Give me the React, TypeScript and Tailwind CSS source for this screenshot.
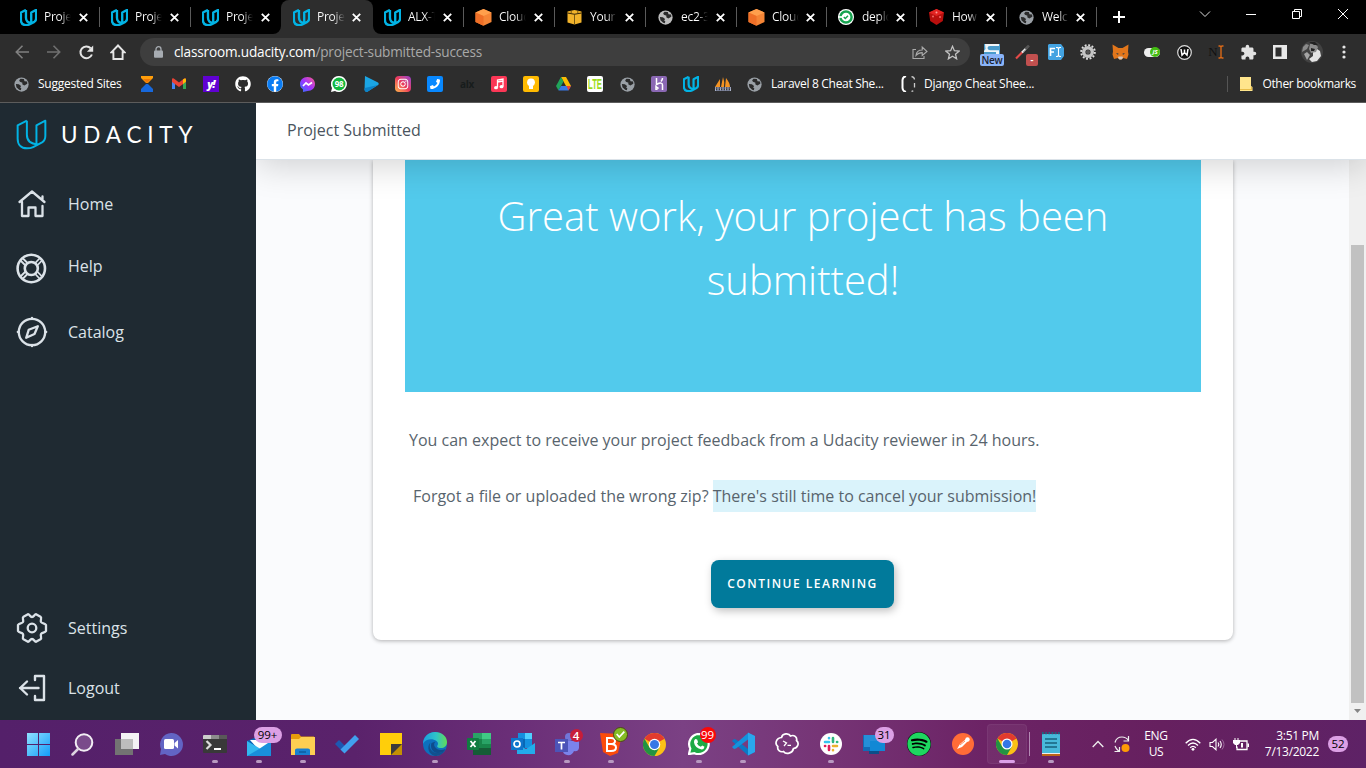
import React from "react";
import { FaGithub, FaInstagram, FaSpotify, FaFacebook, FaPhoneAlt } from "react-icons/fa";
import { MdExtension } from "react-icons/md";

type P = { s?: number };

const UMark = ({ s = 17, w = 13 }: { s?: number; w?: number }) => (
  <svg width={s} height={s} viewBox="0 0 94 94" fill="none" stroke="#02b3e4" strokeWidth={w} strokeLinejoin="round" className="shrink-0">
    <path d="M33 5 5 19V60C5 78 16 89 33 89C40 89 46 88 52 85L79 71C86 67 89 60 89 51V5L62 19V76" />
    <path d="M33 5V48C33 65 45 76 66 77" />
  </svg>
);

const Globe = ({ s = 15, c = "#9aa0a6" }: { s?: number; c?: string }) => (
  <svg width={s} height={s} viewBox="0 0 16 16" className="shrink-0">
    <circle cx="8" cy="8" r="7.6" fill={c} />
    <path d="M7 1.8 5.5 3.5 6.3 5 9 6.2 8.8 7.8 11 9 14.2 7.2 14 4.8 11.2 4.5 10.5 2Z" fill="#2b2b2b" />
    <path d="M2 7.4 5.2 7.6 7.5 9.5 6.6 11.5 7.8 12 7.3 14 5.5 13.6 2.6 11Z" fill="#2b2b2b" />
  </svg>
);

const Cube = () => (
  <svg width="17" height="17" viewBox="0 0 17 17">
    <path d="M8.5 0 16.5 3.5V13L8.5 16.8.5 13V3.5Z" fill="#f58536" />
    <path d="M8.5 0 16.5 3.5 8.5 7 .5 3.5Z" fill="#ff9f4c" />
    <path d="M8.5 7V16.8L.5 13V3.5Z" fill="#ef6f27" />
  </svg>
);

const Box = () => (
  <svg width="15" height="16" viewBox="0 0 15 16">
    <path d="M.5 2.5 7.5 1 14.5 2.5V13.5L7.5 15.5 .5 13.5Z" fill="#f2b32b" />
    <path d="M.5 4 7.5 5.2 14.5 4" stroke="#382808" strokeWidth="1.1" fill="none" />
    <path d="M4.2 4.5V1.5M10.8 4.5V1.5M7.5 5V15.5" stroke="#5c430e" strokeWidth=".8" fill="none" />
  </svg>
);

const CircleCI = () => (
  <svg width="16" height="16" viewBox="0 0 16 16">
    <circle cx="8" cy="8" r="8" fill="#fff" />
    <circle cx="8" cy="8" r="5.6" fill="none" stroke="#16a34f" strokeWidth="2.5" />
    <path d="M0 8H4" stroke="#fff" strokeWidth="1.7" />
    <path d="m5.8 8 1.5 1.5 2.7-2.7" fill="none" stroke="#16a34f" strokeWidth="1.5" />
  </svg>
);

const RedCube = () => (
  <svg width="15" height="16" viewBox="0 0 15 16">
    <path d="M7.5 0 15 3.5 13.8 12 7.5 16 1.2 12 0 3.5Z" fill="#b90f0d" />
    <path d="M7.5 0 15 3.5 7.5 7 0 3.5Z" fill="#e32422" />
    <circle cx="7.5" cy="3.6" r="1" fill="#ff9c98" />
    <circle cx="4" cy="7.5" r="1" fill="#f26a67" />
    <circle cx="11" cy="8" r="1" fill="#f26a67" />
  </svg>
);

const Close = () => (
  <svg width="9" height="9" viewBox="0 0 9 9" className="absolute right-[12px] top-[12.5px]">
    <path d="m.8.8 7.4 7.4m0-7.4L.8 8.2" stroke="#fff" strokeWidth="1.8" />
  </svg>
);

const tabs: { icon: React.ReactNode; t: string; active?: boolean; sep?: boolean; narrow?: boolean }[] = [
  { icon: <UMark />, t: "Proje", sep: true },
  { icon: <UMark />, t: "Proje", sep: true },
  { icon: <UMark />, t: "Proje" },
  { icon: <UMark />, t: "Proje", active: true },
  { icon: <UMark />, t: "ALX-T", sep: true },
  { icon: <Cube />, t: "Cloud", sep: true },
  { icon: <Box />, t: "Your", sep: true },
  { icon: <Globe c="#bdbdbd" />, t: "ec2-3", sep: true },
  { icon: <Cube />, t: "Cloud", sep: true, narrow: true },
  { icon: <CircleCI />, t: "deplo", sep: true, narrow: true },
  { icon: <RedCube />, t: "How", sep: true, narrow: true },
  { icon: <Globe />, t: "Welc", sep: true, narrow: true },
];

const TabBar = () => (
  <div className="flex h-[34px] bg-black pl-[9px]">
    {tabs.map((t, i) => (
      <div
        key={i}
        className={(t.narrow ? "w-[90px] " : "w-[91px] ") + "relative flex h-[34px] shrink-0 items-center pl-[10px] " + (t.active ? "z-10" : "")}
      >
        {t.active && (
          <span className="absolute -left-px bottom-0 -z-10 h-full w-[92px] rounded-t-[8px] bg-[#2d2d2d]">
            <svg width="8" height="8" viewBox="0 0 8 8" className="absolute -left-[8px] bottom-0"><path d="M8 0V8H0A8 8 0 0 0 8 0" fill="#2d2d2d" /></svg>
            <svg width="8" height="8" viewBox="0 0 8 8" className="absolute -right-[8px] bottom-0"><path d="M0 0V8H8A8 8 0 0 1 0 0" fill="#2d2d2d" /></svg>
          </span>
        )}
        <span className="flex w-[18px] justify-center">{t.icon}</span>
        <span className={"ml-[7px] w-[28px] whitespace-nowrap text-[12px] leading-[18px] tracking-[-0.25px] text-transparent bg-clip-text bg-gradient-to-r from-white from-60% " + (t.active ? "to-[#2d2d2d]" : "to-black")}>{t.t}</span>
        <Close />
        {t.sep && <i className="absolute right-0 top-[7px] h-5 w-px bg-[#5a5a5a]" />}
      </div>
    ))}
    <div className="flex w-[43px] items-center justify-center">
      <svg width="12" height="12" viewBox="0 0 12 12"><path d="M6 0V12M0 6H12" stroke="#fff" strokeWidth="2" /></svg>
    </div>
    <div className="ml-auto flex h-[28px] items-center">
      <svg width="46" height="12" viewBox="0 0 46 12"><path d="m18 3.5 5 5 5-5" stroke="#ddd" fill="none" /></svg>
      <svg width="46" height="12" viewBox="0 0 46 12"><path d="M18 6.5H28" stroke="#fff" /></svg>
      <svg width="46" height="12" viewBox="0 0 46 12"><path d="M18.5 3.5h7v7h-7zM20.5 3.5v-2h7v7h-2" stroke="#fff" fill="none" /></svg>
      <svg width="46" height="12" viewBox="0 0 46 12"><path d="m18 1 10 10M28 1 18 11" stroke="#fff" fill="none" /></svg>
    </div>
  </div>
);

const Cell = ({ children }: { children: React.ReactNode }) => <span className="relative flex w-8 shrink-0 items-center justify-center">{children}</span>;

const Toolbar = () => (
  <div className="flex h-[36px] shrink-0 items-center pl-[6px]">
    <Cell><svg width="14" height="14" viewBox="0 0 14 14"><path d="M14 7H1.5M7.5.8 1.3 7l6.2 6.2" fill="none" stroke="#808080" strokeWidth="1.6" /></svg></Cell>
    <Cell><svg width="14" height="14" viewBox="0 0 14 14"><path d="M0 7H12.5M6.5.8 12.7 7l-6.2 6.2" fill="none" stroke="#707070" strokeWidth="1.6" /></svg></Cell>
    <Cell><svg width="15" height="15" viewBox="0 0 15 15"><path d="M12.9 9.5A5.9 5.9 0 1 1 11.7 3.3" fill="none" stroke="#e5e5e5" strokeWidth="2" /><path d="M14.2 .5V6.8H7.9Z" fill="#e5e5e5" /></svg></Cell>
    <Cell><svg width="16" height="16" viewBox="0 0 16 16"><path d="M1.6 8.2 8 1.5l6.4 6.7H12.6V15H3.4V8.2Z" fill="none" stroke="#e5e5e5" strokeWidth="1.9" /></svg></Cell>
    <div className="ml-[6px] flex h-7 w-[830px] items-center rounded-full bg-[#3e3e3e] pl-[14px]">
      <svg width="9" height="12" viewBox="0 0 9 12"><rect y="4.5" width="9" height="7.2" rx="1" fill="#a7acb2" /><path d="M2 5V3.2a2.5 2.5 0 0 1 5 0V5" fill="none" stroke="#a7acb2" strokeWidth="1.3" /></svg>
      <span className="ml-[11px] whitespace-nowrap text-[13.6px] leading-5 tracking-[-0.18px] text-white">classroom.udacity.com<span className="text-[#a9a9a9]">/project-submitted-success</span></span>
      <span className="ml-auto flex w-8 justify-center"><svg width="16" height="15" viewBox="0 0 16 15"><path d="M4 4.5H1V13.5H12V11M4 10.5C4.4 7 7 5 10.2 5V2L15 6.5 10.2 10.5V7.6C7.5 7.6 5.6 8.5 4 10.5Z" fill="none" stroke="#aaa" strokeWidth="1.1" /></svg></span>
      <span className="mr-[2px] flex w-8 justify-center"><svg width="15" height="15" viewBox="0 0 24 24"><path d="m12 2 3 7 7.6.7-5.8 5 1.8 7.5L12 18.1l-6.6 4.1 1.8-7.5-5.8-5L9 9Z" fill="none" stroke="#c4c4c4" strokeWidth="2" /></svg></span>
    </div>
    <div className="ml-[6px] flex h-full">
      <Cell>
        <svg width="16" height="17" viewBox="0 0 16 17"><path d="M0 0H16V17H0Z" fill="#4a9bcb" /><path d="M1 0H15V2H6Q3.500 2 3.500 4T6 6.200H15V17H12V8H0V7L1.500 5Z" fill="#f1f5f7" /></svg>
        <b className="absolute left-[4px] top-[20px] h-3 w-6 rounded-[2px] bg-[#8ab4f8] text-center text-[10px] font-semibold leading-[12px] tracking-[-0.3px] text-[#1c2230]">New</b>
      </Cell>
      <Cell>
        <svg width="15" height="15" viewBox="0 0 15 15" className="-ml-1"><path d="M1 13.5 7.5 7" stroke="#e54a48" strokeWidth="2.2" /><path d="m7 7.5 4-4" stroke="#eee" strokeWidth="2.2" /><path d="m8.500 7 4-4" stroke="#777" strokeWidth="1" /><path d="m10.500 4 3.500-3.500" stroke="#555" strokeWidth="2.600" /></svg>
        <b className="absolute left-[18px] top-[20px] h-3 w-3 rounded-[2px] bg-[#c1504f] text-center text-[9px] leading-[11px] text-white">-</b>
      </Cell>
      <Cell><svg width="16" height="16" viewBox="0 0 16 16"><path d="M1 0H13L16 4V12L13 16H1L0 15V1Z" fill="#43a3e2" /><path d="M2.5 12V4.500H7M2.500 8H6" fill="none" stroke="#fff" strokeWidth="1.7" /><path d="M8 3.500H9.500L10.500 4.500 11.500 3.500H13M10.500 4.500v7M8 12.500H9.500L10.500 11.500 11.500 12.500H13" fill="none" stroke="#fff" strokeWidth="1.1" /></svg></Cell>
      <Cell><svg width="16" height="16" viewBox="0 0 16 16"><circle cx="8" cy="8" r="6.8" fill="none" stroke="#ddd" strokeWidth="2" strokeDasharray="1.9 1.66" /><circle cx="8" cy="8" r="4.300" fill="none" stroke="#c5c5c5" strokeWidth="3.400" /><circle cx="8" cy="8" r="2" fill="#555" /></svg></Cell>
      <Cell><svg width="17" height="16" viewBox="0 0 17 16"><path d="m.5.5 6 3.500h4l6-3.500-.5 7 .5 3-1.500 4.500-4-1-1.500 1.500h-2L6 14l-4 1L.5 10.500l.5-3Z" fill="#e2761b" /><path d="m6 14 .5-1.500h4L11 14l-1.500 1.500h-2Z" fill="#d5c5b8" /><path d="m4 9 2.500.5L6 11ZM13 9l-2.500.5.5 1.500Z" fill="#2d3a46" /></svg></Cell>
      <Cell><span className="flex h-[9px] w-4 items-center justify-end rounded-full bg-[#eee]"><i className="flex size-[10px] items-center justify-center rounded-full bg-[#43bd12] text-[6px] font-bold text-white">JS</i></span></Cell>
      <Cell><svg width="15" height="15" viewBox="0 0 15 15"><circle cx="7.5" cy="7.5" r="6.8" fill="#111" stroke="#ddd" strokeWidth="1.2" /><path d="M4 4 5 10.200 7.500 7.500 10 10.200 11 4M7.500 4.500V8" stroke="#fff" strokeWidth="1.500" fill="none" /></svg></Cell>
      <Cell><span className="font-['Liberation_Serif'] text-[13px] leading-4 text-[#111]">N</span><svg width="6" height="14" viewBox="0 0 6 14"><path d="M.5 1H2L3 2 4 1H5.5M3 2V12M.5 13H2L3 12 4 13H5.5" stroke="#d96918" strokeWidth="1.4" fill="none" /></svg></Cell>
      <Cell><MdExtension size={17} color="#e2e2e2" /></Cell>
      <Cell><svg width="14" height="14" viewBox="0 0 14 14"><path d="M0 0H14V14H0ZM2.500 2.500V11.500H8.500V2.500Z" fillRule="evenodd" fill="#e8e8e8" /></svg></Cell>
      <Cell><svg width="22" height="22" viewBox="0 0 22 22"><circle cx="11" cy="11" r="11" fill="#424242" /><path d="M1 11 2 6 5 3 8 4 6 8Z" fill="#8a8a8a" /><path d="M12 10 16 8 19 10 20 15 16 20 11 21 8 18 12 15Z" fill="#e4e4e4" /><path d="m9 3 5 0 3 3-2 5-5 1-2-4Z" fill="#8c8c8c" /><path d="m10 7 4 1-1 2-3 0ZM8 1 14 1 17 4 13 4Z" fill="#222" /><path d="M3 13 6 11 9 14 6 19Z" fill="#a5a5a5" /></svg></Cell>
      <Cell><svg width="4" height="14" viewBox="0 0 4 14" fill="#e5e5e5"><circle cx="2" cy="2" r="1.6" /><circle cx="2" cy="7" r="1.6" /><circle cx="2" cy="12" r="1.6" /></svg></Cell>
    </div>
  </div>
);

const Sq = ({ c, children }: { c: string; children?: React.ReactNode }) => <span className={"flex size-4 items-center justify-center rounded-[2px] " + c}>{children}</span>;

const Bookmarks = () => (
  <div className="flex h-[28px] shrink-0 items-center pl-[14px] text-[12px] leading-4 tracking-[-0.25px] text-white">
    <Globe />
    <span className="ml-[9px] w-[93px] whitespace-nowrap">Suggested Sites</span>
    <Cell><svg width="14" height="16" viewBox="0 0 14 16"><path d="M1 0H13V2L8 7H6L1 2Z" fill="#ff9d0a" /><path d="M6 8H8L13 13V16H1V13Z" fill="#1768dc" /><path d="m3 3 8 0-4 4Z" fill="#ef7705" /></svg></Cell>
    <Cell><svg width="14" height="12" viewBox="0 0 14 12"><path d="M0 11V1L3 3V11Z" fill="#4285f4" /><path d="M14 11V1L11 3V11Z" fill="#34a853" /><path d="M0 1.5C0 0 1.5 0 2.5 1L7 4.5 11.5 1C12.5 0 14 0 14 1.5V4L7 9 0 4Z" fill="#ea4335" /><path d="M11 1.5C12.5 0 14 0 14 1.5V3.5L11 6Z" fill="#fbbc04" /></svg></Cell>
    <Cell><span className="flex size-4 items-center justify-center bg-[#6001d2] pb-[2px] text-[11px] font-extrabold italic leading-none tracking-[-1px]">y!</span></Cell>
    <Cell><FaGithub size={16} /></Cell>
    <Cell><span className="flex rounded-full bg-white"><FaFacebook size={16} color="#0a7cf3" /></span></Cell>
    <Cell><svg width="15" height="15" viewBox="0 0 15 15"><defs><linearGradient id="ms" x1="0" y1="1" x2="1" y2="0"><stop stopColor="#2878ff" /><stop offset=".5" stopColor="#a033ff" /><stop offset="1" stopColor="#ff5c87" /></linearGradient></defs><path d="M7.5 0C12 0 15 3 15 7S12 14 7.5 14L3 15V12.5C1 11 0 9.5 0 7 0 3 3 0 7.5 0Z" fill="url(#ms)" /><path d="m3 9 3-3 2.5 2L12 5.5" stroke="#fff" strokeWidth="1.7" fill="none" /></svg></Cell>
    <Cell><svg width="16" height="16" viewBox="0 0 16 16"><path d="M8 0A8 8 0 1 1 4 15L0 16 1 12A8 8 0 0 1 8 0" fill="#fff" /><circle cx="8" cy="8" r="6.5" fill="#12b93f" /></svg><b className="absolute text-[8px] leading-none">98</b></Cell>
    <Cell><svg width="15" height="16" viewBox="0 0 15 16"><path d="M1 0 14 6.5Q15.5 8 14 9L3 16Q1 16 .5 14Z" fill="#1ba5e4" /><path d="M.8 12 14 9 3 16Q1 16 .5 14Z" fill="#0c82c8" /></svg></Cell>
    <Cell><span className="flex size-4 items-center justify-center rounded-[4px] bg-gradient-to-tr from-[#fdb447] via-[#ec3859] to-[#9637cf]"><FaInstagram size={12} /></span></Cell>
    <Cell><Sq c="bg-[#0888ff]"><FaPhoneAlt size={10} className="-scale-x-100" /></Sq></Cell>
    <Cell><b className="text-[10px] leading-none text-[#171c1c]">alx</b></Cell>
    <Cell><Sq c="bg-[#fb3756]"><svg width="12" height="12" viewBox="0 0 12 12"><path d="M4.5 9.5V2L10 1V8.5M4.5 4 10 3" stroke="#fff" fill="none" strokeWidth="1.3" /><ellipse cx="3" cy="9.7" rx="2" ry="1.6" fill="#fff" /><ellipse cx="8.5" cy="8.7" rx="2" ry="1.6" fill="#fff" /></svg></Sq></Cell>
    <Cell><Sq c="bg-[#ffba00]"><svg width="8" height="12" viewBox="0 0 8 12"><circle cx="4" cy="4.3" r="3.9" fill="#fff" /><path d="M2 8H6V11H2Z" fill="#fff" /></svg></Sq></Cell>
    <Cell><svg width="15" height="14" viewBox="0 0 15 14"><path d="M5 0H10L15 9H10Z" fill="#fbbc04" /><path d="M5 0 7.5 4.5 2.5 13.5 0 9Z" fill="#20a45a" /><path d="M5 9H15L12.5 13.5H2.5Z" fill="#3979e8" /><path d="M10.5 9H15L12.5 13.5Z" fill="#ea4335" /></svg></Cell>
    <Cell><Sq c="bg-white"><svg width="16" height="16" viewBox="0 0 16 16" className="overflow-visible"><text x="1" y="13" textLength="14" lengthAdjust="spacingAndGlyphs" fontFamily="Liberation Sans" fontWeight="700" fontSize="14" letterSpacing="0" fill="#9bdc18">LTE</text></svg></Sq></Cell>
    <Cell><Globe /></Cell>
    <Cell><Sq c="bg-[#8b68b4]"><svg width="9" height="12" viewBox="0 0 9 12"><path d="M1.5 0V6.5Q7.5 3.5 7.5 7V12M7.5 0Q7.5 2 6 3.5M1 8.5 3 10 1 12Z" stroke="#fff" strokeWidth="1.5" fill="none" /></svg></Sq></Cell>
    <Cell><UMark s={16} /></Cell>
    <Cell><svg width="16" height="15" viewBox="0 0 16 15"><path d="M5 2V10H0ZM8 0Q10 5 9 10H6ZM11 1Q15 6 15 10H10Z" fill="#f39322" /><path d="M.5 10V14M3 10V14M5.5 10V14M8 10V14M10.5 10V14M13 10V14M15.5 10V14" stroke="#aab3c9" strokeWidth="1.2" /><path d="M0 11H16M1 13.5H15" stroke="#7b829c" strokeWidth=".8" /></svg></Cell>
    <span className="ml-[8px]"><Globe /></span>
    <span className="ml-[9px] w-[130px] whitespace-nowrap tracking-[-0.3px]">Laravel 8 Cheat She...</span>
    <svg width="15" height="16" viewBox="0 0 15 16"><path d="M5 0Q1.5 1 1.5 4V12Q1.5 15 5 16" fill="none" stroke="#fff" strokeWidth="2" /><path d="M10.5 .7Q13.5 1 13.5 4V12Q13.5 15 10.5 15.3" fill="none" stroke="#ccc" strokeWidth="1.3" strokeDasharray="4.5 3.5" /></svg>
    <span className="ml-[8px] whitespace-nowrap">Django Cheat Shee...</span>
    <i className="ml-auto h-4 w-px bg-[#555]" />
    <svg width="13" height="14" viewBox="0 0 13 14" className="ml-[12px]"><path d="M0 0H11V9L12.5 10V14H0Z" fill="#ffe58c" /><path d="M0 13H12V10H11V12H0Z" fill="#e8bd48" /></svg>
    <span className="ml-[9px] mr-[10px] whitespace-nowrap tracking-[-0.33px]">Other bookmarks</span>
  </div>
);

const nav = { fill: "none", stroke: "#dbe2e8", strokeWidth: 2.3, strokeLinecap: "round" as const, strokeLinejoin: "round" as const };
const HomeIcon = () => <svg width="32" height="32" viewBox="0 0 32 32" {...nav}><path d="M3.5 14 16 3.5 28.5 14M6 14V28H12.5V19.5H19.5V28H26.5V18M26.5 12V8.5" /></svg>;
const HelpIcon = () => <svg width="32" height="32" viewBox="0 0 32 32" {...nav} strokeWidth={2.6}><circle cx="15.3" cy="16.5" r="13.7" /><circle cx="15.3" cy="16.5" r="6.5" /><path d="m6.500 6 5 5M4.500 8.500 9.500 13.500M24 6 19.200 11M26 8.500 21.200 13.500M6.500 27l5-5M4.500 24.500 9.500 19.500M24 27l-4.800-5M26 24.500 21.200 19.500" strokeWidth={1.800} /></svg>;
const CatalogIcon = () => <svg width="32" height="32" viewBox="0 0 32 32" {...nav}><circle cx="16" cy="16" r="13.2" /><path d="M16 1.8V3M16 29v1.2M1.8 16H3M29 16h1.2M21.8 10.2 18.5 18 10.2 21.8 12.7 13.8Z" /></svg>;
const SettingsIcon = () => (
  <svg width="32" height="32" viewBox="0 0 32 32" {...nav}>
    <circle cx="16" cy="16" r="4.3" />
    <path d="M12 2.2C13.5 2 14 5 16 5S18.5 2 20 2.2L24.5 4.8C26.3 6 24 8.3 25 10S29 11 30 13V19C29 21 26 20.3 25 22S26.3 26 24.5 27.2L20 29.8C18.5 30 18 27 16 27S13.5 30 12 29.8L7.5 27.2C5.7 26 8 23.7 7 22S3 21 2 19V13C3 11 6 11.7 7 10S5.7 6 7.5 4.8Z" />
  </svg>
);
const LogoutIcon = () => <svg width="32" height="32" viewBox="0 0 32 32" {...nav} strokeWidth={2.4}><path d="M22.5 16H4M11 9.5 4.2 16 11 22.5M19 8V4H28V28H19V24" /></svg>;

const NavItem = ({ icon, label, cls, up }: { icon: React.ReactNode; label: string; cls: string; up?: boolean }) => (
  <a className={"flex h-8 items-center pl-4 text-[16px] leading-6 text-[#dbe2e8] " + cls}>
    {icon}
    <span className={"ml-5 " + (up ? "pb-[4px]" : "")}>{label}</span>
  </a>
);

const Sidebar = () => (
  <aside className="relative z-20 flex w-64 shrink-0 flex-col bg-[#1f2a32]">
    <div className="mt-[15px] flex h-[32px] shrink-0 items-center pl-[16px]">
      <UMark s={31} w={6} />
      <span className="ml-[14px] pt-[2px] font-[Lato] text-[22.5px] leading-8 tracking-[5.8px] text-white">UDACITY</span>
    </div>
    <NavItem icon={<HomeIcon />} label="Home" cls="mt-[38px]" />
    <NavItem icon={<HelpIcon />} label="Help" cls="mt-[32px]" up />
    <NavItem icon={<CatalogIcon />} label="Catalog" cls="mt-[32px]" />
    <NavItem icon={<SettingsIcon />} label="Settings" cls="mt-auto" />
    <NavItem icon={<LogoutIcon />} label="Logout" cls="mb-[16px] mt-[28px]" />
  </aside>
);

const Main = () => (
  <main className="flex min-w-0 flex-1 flex-col bg-[#fafbfd]">
    <header className="relative z-10 flex h-[57px] shrink-0 items-center border-b border-[#dbe2e8] bg-white pb-[2px] pl-[31px] text-[16px] text-[#4a545e] shadow-[0_5px_35px_rgba(0,0,0,0.18)]">
      Project Submitted
    </header>
    <div className="flex min-h-0 flex-1">
      <div className="flex min-w-0 flex-1 flex-col items-center pl-[1px]">
        <section className="flex h-[480px] w-[860px] flex-col rounded-b-[8px] bg-white px-8 shadow-[0_1px_4px_rgba(0,0,0,0.3)]">
          <div className="h-[232px] bg-[#52caec] px-20 pt-[24px] text-center text-[40px] font-light leading-[64px] text-white">
            Great work, your project has been submitted!
          </div>
          <p className="mt-8 pl-1 text-[16px] leading-8 text-[#58646d]">You can expect to receive your project feedback from a Udacity reviewer in 24 hours.</p>
          <p className="mt-6 pl-2 text-[16px] leading-8 text-[#58646d]">
            Forgot a file or uploaded the wrong zip? <span className="inline-block bg-[#daf3fb]">There's still time to cancel your submission!</span>
          </p>
          <button className="ml-[306px] mt-12 h-12 w-[183px] rounded-[8px] bg-[#017a9b] text-[12px] font-semibold tracking-[1.5px] text-white shadow-[2px_3px_8px_rgba(0,0,0,0.25)]">CONTINUE LEARNING</button>
        </section>
      </div>
      <div className="flex w-[17px] flex-col items-center bg-[#f0f0f0]">
        <i className="mt-[85px] h-[458px] w-[13px] bg-[#c1c1c1]" />
        <svg width="7" height="4" viewBox="0 0 7 4" className="mt-[6px]"><path d="M0 0H7L3.5 4Z" fill="#858585" /></svg>
      </div>
    </div>
  </main>
);

const Chrome = ({ s = 23 }: P) => (
  <svg width={s} height={s} viewBox="0 0 24 24">
    <circle cx="12" cy="12" r="12" fill="#fbc116" />
    <path d="M12 12 1.6 6A12 12 0 0 1 22.4 6Z" fill="#e33b2e" />
    <path d="M12 6H22.4" stroke="#e33b2e" strokeWidth=".5" />
    <path d="M1.6 6 6.8 15 12 17.5 17.2 15 12 24A12 12 0 0 1 1.6 6" fill="#229342" />
    <circle cx="12" cy="12" r="6" fill="#fff" />
    <circle cx="12" cy="12" r="4.7" fill="#3477e6" />
  </svg>
);

const Task = ({ children, dot, active, badge }: { children: React.ReactNode; dot?: boolean; active?: boolean; badge?: React.ReactNode }) => (
  <div className="relative flex h-12 w-11 shrink-0 items-center justify-center">
    {active && <i className="absolute left-[2px] top-1 h-10 w-10 rounded-[4px] border border-white/5 bg-white/5" />}
    <span className="relative">{children}</span>
    {badge}
    {dot && <i className="absolute bottom-[5px] h-[3px] w-[6px] rounded-full bg-[#b899c0]" />}
    {active && <i className="absolute bottom-[5px] h-[3px] w-4 rounded-full bg-[#dca0e8]" />}
  </div>
);

const Pill = ({ children, cls }: { children: React.ReactNode; cls: string }) => <b className={"absolute flex h-4 items-center justify-center rounded-full text-[11.5px] font-normal leading-none " + cls}>{children}</b>;

const Taskbar = () => (
  <footer className="flex h-12 shrink-0 items-center bg-[linear-gradient(90deg,#54206a_0%,#5a226b_26%,#6b2f78_38%,#7b4184_50%,#763576_60%,#6c2365_72%,#66205f_85%,#5e2266_100%)] pl-[16.5px] text-white">
    <Task><svg width="23" height="23" viewBox="0 0 23 23"><defs><linearGradient id="wn" x2="1" y2="1"><stop stopColor="#90e1ff" /><stop offset="1" stopColor="#129cf8" /></linearGradient></defs><path d="M0 0H11V11H0ZM12 0H23V11H12ZM0 12H11V23H0ZM12 12H23V23H12Z" fill="url(#wn)" /></svg></Task>
    <Task><svg width="23" height="23" viewBox="0 0 23 23"><circle cx="13" cy="9.5" r="8.3" fill="#7a4b8b" stroke="#f2eef4" strokeWidth="2" /><path d="M7 16 1.5 21.5" stroke="#ddd4e0" strokeWidth="2.5" strokeLinecap="round" /></svg></Task>
    <Task><svg width="24" height="22" viewBox="0 0 24 22"><rect x="6" width="18" height="16" fill="#f4f2f5" /><rect y="6" width="18" height="16" fill="#737373" /><path d="M6 6H18V16H6Z" fill="#bdbdbd" /></svg></Task>
    <Task><svg width="24" height="24" viewBox="0 0 24 24"><path d="M12 1A11.5 11.5 0 1 1 6 22L1 23 2 17A11.5 11.5 0 0 1 12 1" fill="#6264c4" /><rect x="5" y="7" width="10" height="10" rx="1.5" fill="#fff" /><path d="m15.5 11 3.5-3V16.5L15.5 13.5Z" fill="#fff" /></svg></Task>
    <Task dot><svg width="24" height="18" viewBox="0 0 24 18"><rect width="24" height="18" rx="1" fill="#393939" /><path d="M0 1Q0 0 1 0H8V4H0Z" fill="#ccc" /><path d="M8 0H16V4H8Z" fill="#8c8c8c" /><path d="M16 0H24V4H16Z" fill="#595959" /><path d="m3.5 6 4 4-4 4" fill="none" stroke="#ddd" strokeWidth="2.2" /><path d="M11 14H18" stroke="#fff" strokeWidth="2" /></svg></Task>
    <Task dot badge={<Pill cls="left-[17px] top-[7px] w-7 bg-[#dca0e5] text-black">99+</Pill>}><svg width="24" height="20" viewBox="0 0 24 20" className="mt-[3px]"><path d="M0 5 12 0 24 5V20H0Z" fill="#0c63b5" /><path d="M3 4H21V12L12 14Z" fill="#fff" /><path d="M0 5 12 12 24 20H0Z" fill="#33b8ef" /><path d="m24 5L12 13 0 20H24Z" fill="#198fdc" /></svg></Task>
    <Task dot><svg width="24" height="21" viewBox="0 0 24 21"><path d="M0 1Q0 0 1 0H8L10 2.5H23V8H0Z" fill="#e69c0b" /><path d="M0 5H8L10 3H24V21H0Z" fill="#fdcf52" /><path d="M4 21V16Q4 14.5 6 14.5H17Q19 14.5 19 16V21Z" fill="#1880d0" /><path d="M8 18H15" stroke="#0c5c9f" strokeWidth="1.5" /></svg></Task>
    <Task><svg width="24" height="20" viewBox="0 0 24 20"><path d="M0 10 4 6 12 14 8 18Z" fill="#1d58b2" /><path d="m5.5 15.5L20 1 24 5 9.5 19.5Z" fill="#41a0ee" /></svg></Task>
    <Task><svg width="22" height="22" viewBox="0 0 22 22"><path d="M0 0H22V22H0Z" fill="#ffce0a" /><path d="M11 11H22V22H11Z" fill="#c49103" /><path d="M11 22V11H22Z" fill="#3b3b3b" /></svg></Task>
    <Task dot><svg width="24" height="24" viewBox="0 0 24 24"><defs><linearGradient id="ed" x2="1"><stop stopColor="#1b9de0" /><stop offset=".55" stopColor="#2fc3c8" /><stop offset="1" stopColor="#62db57" /></linearGradient></defs><circle cx="12" cy="12" r="12" fill="#0d70bd" /><path d="M7.5 10.5C5 16 9 21 15 21 18 21 20.5 20 22.5 17.5 20 22 16 24 12 24 6 23 3 15 7.5 10.5" fill="#12508e" /><path d="M12.5 9.5C11 11 10.5 13 12 15 14 18 18 19 22.5 17 21 20 18 21 15 21 9 21 7 15 8.5 11Z" fill="#0f4c8c" /><path d="M0 12C0 5 5 0 12 0S24 4.5 24 10C24 14.5 20.5 16.5 17 16 14.5 15.8 13.5 14.5 14.5 13.2 15.5 12 15 10 13.5 9 11 7 7 6.5 4 8 2 9 .5 10.5 0 12" fill="url(#ed)" /></svg></Task>
    <Task><svg width="24" height="22" viewBox="0 0 24 22"><path d="M6 0H24V22H6Z" fill="#18854a" /><path d="M6 0H15V6H6ZM15 6H24V11H15Z" fill="#29a366" /><path d="M15 0H24V6H15Z" fill="#40c984" /><path d="M6 15H24V22H6Z" fill="#155c36" /><rect y="5" width="12" height="12" rx="1" fill="#107c41" /><path d="m3.5 8 5 6m0-6-5 6" stroke="#fff" strokeWidth="1.8" /></svg></Task>
    <Task><svg width="24" height="22" viewBox="0 0 24 22"><path d="M7 0H21V15H7Z" fill="#1490df" /><path d="M14 0H21V6H14Z" fill="#4fd0ff" /><path d="M7 6H14V15H7Z" fill="#0868b5" /><path d="M6 11 15 16 24 10V21H6Z" fill="#23aceb" /><rect y="5" width="12" height="12" fill="#0f75cc" /><circle cx="6" cy="11" r="3" fill="none" stroke="#fff" strokeWidth="1.7" /></svg></Task>
    <Task dot badge={<Pill cls="left-[25px] top-[9px] !h-[13px] w-[13px] bg-[#c81d39] font-semibold">4</Pill>}><svg width="24" height="23" viewBox="0 0 24 23"><circle cx="14" cy="4" r="4" fill="#7176d8" /><path d="M8 8H24V15Q23 19 19 18 17 23 12 22T8 16Z" fill="#7b83eb" /><rect y="6" width="13" height="13" fill="#4c54b8" /><path d="M3 9.5H10M6.5 9.5V16.5" stroke="#fff" strokeWidth="1.7" /></svg></Task>
    <Task dot badge={<Pill cls="left-[24px] top-[7px] !h-[15px] w-[15px] bg-[#85bc24] border border-[#4d4518]"><svg width="9" height="7" viewBox="0 0 9 7"><path d="m.7 3 2.6 3L8.3.7" fill="none" stroke="#fff" strokeWidth="1.7" /></svg></Pill>}><svg width="22" height="24" viewBox="0 0 22 24"><path d="M0 1 22 2 18 21 10 24 3 20Z" fill="#fb4b0b" /><path d="M7 19V6H11Q15 6 15 9T11 12Q16 12 16 15.5T11 19H6M8 12h3" stroke="#fff" strokeWidth="2" fill="none" /></svg></Task>
    <Task><Chrome /></Task>
    <Task dot badge={<Pill cls="left-[23px] top-[7px] w-4 bg-[#fa0808]">99</Pill>}><svg width="22" height="22" viewBox="0 0 24 24"><path d="M12 1A11 11 0 1 1 7 22L1 23 2.5 17A11 11 0 0 1 12 1" fill="#1daa45" stroke="#fff" strokeWidth="2.4" /><path d="M8 6.5 10 7 11 10 9.8 11.5Q11 14 14 15L15.5 13.5 18 15Q17.5 18 15 18 7.5 16.5 6.5 10 6.5 7.5 8 6.5" fill="#fff" /></svg></Task>
    <Task dot><svg width="24" height="24" viewBox="0 0 24 24"><path d="m17 1L24 4V20L17 23.5 1 9 3 7 5 7.5 17 17Z" fill="#0b79c5" /><path d="m17 1L1 15 3 17 5 16.5 17 7.5Z" fill="#1592dd" /><path d="m17 .5 7 3.5V20L17 23.5Z" fill="#2aa7ed" /></svg></Task>
    <Task><svg width="24" height="22" viewBox="0 0 24 22"><path d="M6.5 4.5C7.5 0 14 0 15.5 3 19 1.5 22.5 4 21.5 7.5 24.5 10 23 15 18.5 15.5 17.5 20.5 11 22 8.5 18.5 5 19.5 2 17 2.8 13.5-.5 11 1 5 6.5 4.5Z" fill="none" stroke="#fff" strokeWidth="1.7" /><path d="m8 8 3.5 2-2.5 3M12.5 12.3H16" stroke="#fff" strokeWidth="1.3" fill="none" /></svg></Task>
    <Task dot><svg width="22" height="22" viewBox="0 0 22 22"><circle cx="11" cy="11" r="11" fill="#fff" /><g strokeWidth="2.6" strokeLinecap="round"><path d="M9 5V5.2M5 9H9" stroke="#36c5f0" /><path d="M13 5V9M17 9H17.2" stroke="#2eb67d" /><path d="M13 13H17M13 17V17.2" stroke="#ecb22e" /><path d="M9 13V17M5 13H5.2" stroke="#e01e5a" /></g></svg></Task>
    <Task badge={<Pill cls="left-[22px] top-[7px] w-[19px] bg-[#dca0e5] text-black">31</Pill>}><svg width="23" height="20" viewBox="0 0 23 20"><path d="M0 1H16V17H0Z" fill="#126bb7" /><path d="M1 1H15V13H1Z" fill="#258fd8" /><path d="M7 7H22V17H7Z" fill="#1188d5" /><path d="M6 17H16V20H6Z" fill="#0d4e89" /></svg></Task>
    <Task><span className="flex size-6 items-center justify-center rounded-full bg-black"><FaSpotify size={24} color="#1ed760" /></span></Task>
    <Task><svg width="22" height="22" viewBox="0 0 22 22"><circle cx="11" cy="11" r="11" fill="#ff6c37" /><path d="m5 16 3-5 6-5 2 2-6 6Z" fill="#fff" /><circle cx="15.5" cy="6.5" r="2.2" fill="#fff" /><path d="m8 12 5-4M4.5 16.5H9" stroke="#ff6c37" strokeWidth=".8" /></svg></Task>
    <Task active><Chrome s={22} /></Task>
    <div className="relative"><i className="absolute -top-3 h-6 w-px bg-[#b48bb4]" /></div>
    <Task dot><svg width="18" height="24" viewBox="0 0 18 24"><path d="M0 2H18V21H0Z" fill="#48b9da" /><path d="M0 1H18" stroke="#1c647e" strokeWidth="2.5" strokeDasharray="1.7 1.5" /><path d="M3 7H15M3 11H15M3 15H15" stroke="#17627d" strokeWidth="1.5" /><path d="M0 21H18V22H0Z" fill="#eee" /><path d="M0 22H18V24H0Z" fill="#bd6518" /></svg></Task>
    <div className="ml-auto flex h-full items-center text-[12px] leading-4">
      <svg width="12" height="8" viewBox="0 0 12 8"><path d="m.7 7 5.3-5.5L11.3 7" stroke="#eee" strokeWidth="1.3" fill="none" /></svg>
      <svg width="18" height="18" viewBox="0 0 18 18" className="ml-[9px]"><path d="M2 7.5Q3.5 2 9 2 13 2 15.5 5.5M15.5 1V6H10.5M2 11Q3 14 6 16.5M1.5 16.5H6.5V12" stroke="#eee" strokeWidth="1.2" fill="none" /><circle cx="12.5" cy="13" r="4" fill="#ff9b05" /></svg>
      <span className="ml-[11px] w-[28px] text-center tracking-[-0.35px]">ENG<br />US</span>
      <svg width="16" height="13" viewBox="0 0 16 13" className="ml-[15px]"><path d="M.7 5.2Q8-2.5 15.3 5.2M3 7.5Q8 2.5 13 7.5M5.2 9.8Q8 7 10.8 9.8" stroke="#fff" strokeWidth="1.3" fill="none" /><circle cx="8" cy="11.3" r="1.4" fill="#fff" /></svg>
      <svg width="16" height="13" viewBox="0 0 16 13" className="ml-[8px]"><path d="M1 4.5H3.5L7 1.2V11.8L3.5 8.5H1ZM9 4.5Q10.5 6.5 9 8.5M11 3Q13.5 6.5 11 10" stroke="#fff" strokeWidth="1.1" fill="none" /><path d="M13 1.5Q17 6.5 13 11.5" stroke="#9b6a9b" fill="none" /></svg>
      <svg width="16" height="13" viewBox="0 0 16 13" className="ml-[8px]"><path d="M7 3H14V11.5H4V8.5" stroke="#fff" strokeWidth="1.3" fill="none" /><path d="M8 5H10V9.5H8ZM14.5 5.5H16V9H14.5ZM0 2H7V5L5 7H2L0 5ZM1.5 0h1V3h-1ZM4.5 0h1V3h-1ZM3 7H4V10H3Z" fill="#fff" /></svg>
      <span className="ml-[12px] w-[58px] whitespace-nowrap text-right tracking-[-0.3px]">3:51 PM<br />7/13/2022</span>
      <b className="ml-[9px] mr-[18px] flex h-4 w-5 items-center justify-center rounded-full bg-[#dca0e5] text-[11.5px] font-normal leading-none text-black">52</b>
    </div>
  </footer>
);

export default function App() {
  return (
    <div className="flex h-[768px] w-[1366px] flex-col overflow-hidden bg-[#2d2d2d] font-['Open_Sans','Noto_Sans',sans-serif]">
      <div className="flex h-[103px] shrink-0 flex-col border-b border-[#5c5c5c]">
        <TabBar />
        <Toolbar />
        <Bookmarks />
      </div>
      <div className="flex min-h-0 flex-1 overflow-hidden">
        <Sidebar />
        <Main />
      </div>
      <Taskbar />
    </div>
  );
}
